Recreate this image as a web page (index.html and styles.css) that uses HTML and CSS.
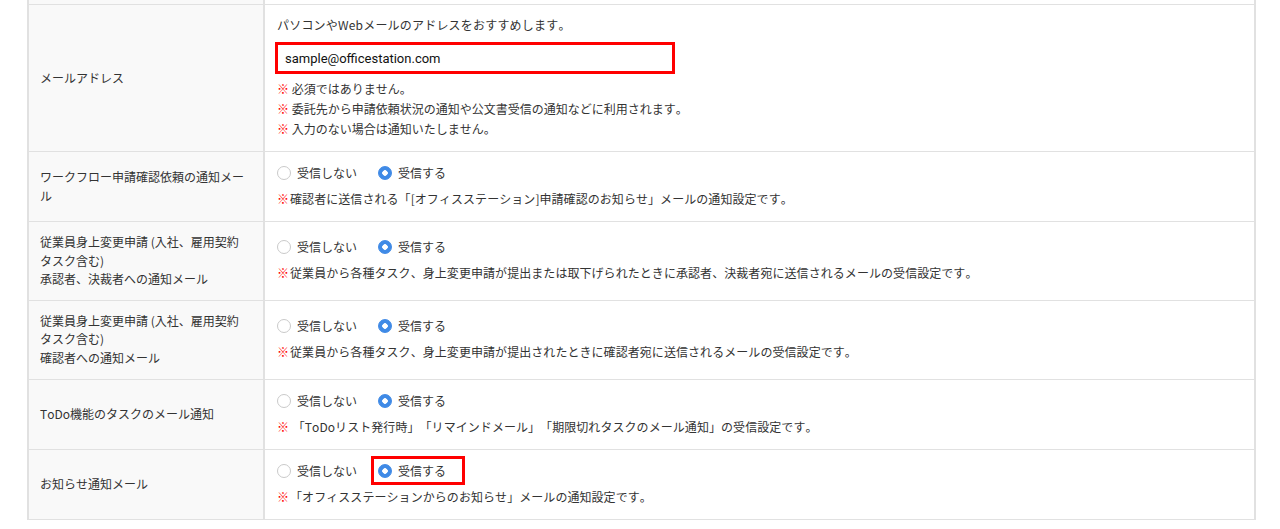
FILE: index.html
```html
<!DOCTYPE html>
<html lang="ja">
<head>
    <meta charset="UTF-8">
    <meta name="viewport" content="width=device-width, initial-scale=1.0">
    <title>通知設定</title>
    <link rel="stylesheet" href="styles.css">
</head>
<body>
    <div class="settings">
        <div class="label tail"></div>
        <div class="value tail"></div>

        <div class="label">メールアドレス</div>
        <div class="value mail-row">
            <p class="hint">パソコンやWebメールのアドレスをおすすめします。</p>
            <input class="email" type="text" value="sample@officestation.com">
            <ul class="notes">
                <li><span class="mark">※</span> 必須ではありません。</li>
                <li><span class="mark">※</span> 委託先から申請依頼状況の通知や公文書受信の通知などに利用されます。</li>
                <li><span class="mark">※</span> 入力のない場合は通知いたしません。</li>
            </ul>
        </div>

        <div class="label">ワークフロー申請確認依頼の通知メール</div>
        <div class="value">
            <div class="radios">
                <label class="radio"><input type="radio" name="workflow">受信しない</label>
                <label class="radio"><input type="radio" name="workflow" checked>受信する</label>
            </div>
            <p class="note"><span class="mark">※</span>確認者に送信される「[オフィスステーション]申請確認のお知らせ」メールの通知設定です。</p>
        </div>

        <div class="label">従業員身上変更申請 (入社、雇用契約タスク含む)<br>承認者、決裁者への通知メール</div>
        <div class="value">
            <div class="radios">
                <label class="radio"><input type="radio" name="approver">受信しない</label>
                <label class="radio"><input type="radio" name="approver" checked>受信する</label>
            </div>
            <p class="note"><span class="mark">※</span>従業員から各種タスク、身上変更申請が提出または取下げられたときに承認者、決裁者宛に送信されるメールの受信設定です。</p>
        </div>

        <div class="label">従業員身上変更申請 (入社、雇用契約タスク含む)<br>確認者への通知メール</div>
        <div class="value">
            <div class="radios">
                <label class="radio"><input type="radio" name="checker">受信しない</label>
                <label class="radio"><input type="radio" name="checker" checked>受信する</label>
            </div>
            <p class="note"><span class="mark">※</span>従業員から各種タスク、身上変更申請が提出されたときに確認者宛に送信されるメールの受信設定です。</p>
        </div>

        <div class="label">ToDo機能のタスクのメール通知</div>
        <div class="value">
            <div class="radios">
                <label class="radio"><input type="radio" name="todo">受信しない</label>
                <label class="radio"><input type="radio" name="todo" checked>受信する</label>
            </div>
            <p class="note"><span class="mark">※</span> 「ToDoリスト発行時」「リマインドメール」「期限切れタスクのメール通知」の受信設定です。</p>
        </div>

        <div class="label">お知らせ通知メール</div>
        <div class="value">
            <div class="radios">
                <label class="radio"><input type="radio" name="info">受信しない</label>
                <label class="radio marked"><input type="radio" name="info" checked>受信する</label>
            </div>
            <p class="note"><span class="mark">※</span>「オフィスステーションからのお知らせ」メールの通知設定です。</p>
        </div>
    </div>
</body>
</html>
```

FILE: styles.css
```css
body {
    margin: 0;
    background-color: #fff;
    font-family: "Noto Sans CJK JP", sans-serif;
    font-size: 12px;
    color: #333;
    text-spacing-trim: space-all;
    font-kerning: none;
}
.settings {
    display: grid;
    grid-template-columns: 236px 1fr;
    width: 1229px;
    margin-left: 27px;
    box-sizing: border-box;
    border-left: 2px solid #e1e1e1;
    border-right: 2px solid #e1e1e1;
}
.label {
    background-color: #f9f9f9;
    border-right: 2px solid #e1e1e1;
    border-bottom: 1px solid #e1e1e1;
    padding: 11px 15px 11px 11px;
    display: flex;
    align-items: center;
    line-height: 18.6px;
}
.value {
    border-bottom: 1px solid #e1e1e1;
    padding: 11px 12px 12px;
    display: flex;
    flex-direction: column;
    justify-content: center;
    line-height: 20px;
}
.tail {
    height: 4px;
    padding: 0;
}
.mail-row {
    padding: 10px 12px 12px;
}
.hint, .note {
    margin: 0;
}
.hint {
    letter-spacing: 0.2px;
}
.note {
    letter-spacing: 0.06px;
}
.email {
    width: 400px;
    height: 32px;
    box-sizing: border-box;
    margin: 7px 0 5px -2px;
    padding: 0 7px;
    border: 3px solid #f00;
    font-family: Roboto, "Liberation Sans", sans-serif;
    font-size: 13px;
    color: #111;
    outline: none;
}
.notes {
    list-style: none;
    margin: 0;
    padding: 0;
}
.mark {
    color: #f00;
}
.note .mark {
    margin-right: 1px;
}
.radios {
    display: flex;
    margin-bottom: 6px;
}
.radio {
    position: relative;
    display: inline-flex;
    align-items: center;
    gap: 6px;
    margin-right: 21px;
}
.radio input {
    appearance: none;
    width: 14px;
    height: 14px;
    margin: 0;
    box-sizing: border-box;
    border: 1px solid #cacaca;
    border-radius: 50%;
    background-color: #fff;
}
.radio input:checked {
    border-color: #3f8ae6;
    background: radial-gradient(circle, #fff 0 2.5px, #3f8ae6 3px);
}
.radio.marked::after {
    content: "";
    position: absolute;
    left: -7px;
    top: -5px;
    width: 94px;
    height: 29px;
    box-sizing: border-box;
    border: 3px solid #f00;
}
```
